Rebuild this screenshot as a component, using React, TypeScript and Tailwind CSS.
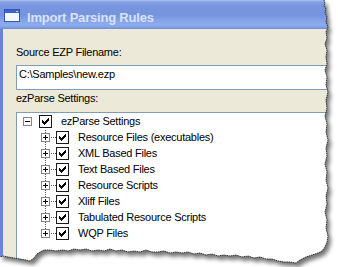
import React from "react";

const EDGE: [number, number][] = [
  [324, 0], [325, 3], [324, 6], [326, 9], [325, 13], [327, 17], [326, 22], [328, 27], [326, 32],
  [327, 38], [325, 44], [327, 50], [326, 57], [327, 64], [325, 70], [327, 77], [326, 85], [328, 92],
  [326, 100], [327, 108], [325, 116], [327, 124], [326, 132], [328, 140], [326, 148], [327, 156],
  [325, 164], [327, 172], [326, 180], [328, 188], [326, 196], [327, 204], [325, 212], [327, 220],
  [326, 228], [328, 236], [327, 242], [325, 247], [322, 251], [318, 253], [312, 255], [306, 257],
  [300, 260], [296, 263], [290, 262], [284, 262], [278, 261], [272, 259], [266, 259], [260, 257],
  [254, 258], [248, 256], [242, 257], [236, 255], [230, 256], [224, 255], [218, 256], [212, 254],
  [206, 255], [200, 253], [194, 254], [188, 252], [182, 253], [176, 252], [170, 253], [164, 251],
  [158, 252], [152, 252], [146, 250], [140, 252], [134, 251], [128, 252], [122, 250], [116, 251],
  [110, 249], [104, 251], [98, 250], [92, 251], [86, 249], [80, 250], [74, 249], [68, 251], [62, 250],
  [56, 251], [50, 250], [44, 250], [40, 252], [37, 254], [34, 258], [30, 261], [26, 260], [20, 259],
  [14, 258], [8, 257], [3, 256], [0, 257],
];

function TornEdge() {
  const line = EDGE.map((p) => p.join(" ")).join(" L");
  const outline = "M0 0 L" + line + " Z";
  const outside = "M-10 -10 H348 V277 H-10 Z " + outline;
  return (
    <svg
      className="pointer-events-none absolute inset-0"
      width="338"
      height="267"
      viewBox="0 0 338 267"
    >
      <defs>
        <filter id="blur" x="-10%" y="-10%" width="120%" height="120%">
          <feGaussianBlur stdDeviation="2" />
        </filter>
        <clipPath id="outside">
          <path d={outside} clipRule="evenodd" />
        </clipPath>
      </defs>
      <path d={outside} fill="#ffffff" fillRule="evenodd" />
      <g clipPath="url(#outside)">
        <path d={outline} transform="translate(3 4)" fill="#000" opacity="0.55" filter="url(#blur)" />
      </g>
      <path d={"M" + line} fill="none" stroke="#222" strokeWidth="0.9" strokeDasharray="1.5 0.7" />
    </svg>
  );
}

const CHECK = [
  "......#",
  ".....##",
  "#...###",
  "##.###.",
  "#####..",
  ".###...",
  "..#....",
];

function Checkbox({ className }: { className?: string }) {
  const rects: React.ReactElement[] = [];
  CHECK.forEach((row, y) =>
    row.split("").forEach((c, x) => {
      if (c === "#") rects.push(<rect key={`${x}-${y}`} x={3 + x} y={3 + y} width="1" height="1" fill="#000" />);
    })
  );
  return (
    <svg className={className} width="13" height="13" viewBox="0 0 13 13" shapeRendering="crispEdges">
      <rect x="0.5" y="0.5" width="12" height="12" fill="#fff" stroke="#1a1a1a" />
      {rects}
    </svg>
  );
}

function Expander({ minus }: { minus?: boolean }) {
  return (
    <>
      <rect x="1.5" y="4.5" width="8" height="8" fill="#fff" stroke="#858585" />
      <line x1="3" y1="8.5" x2="8" y2="8.5" stroke="#000" />
      {!minus && <line x1="5.5" y1="6" x2="5.5" y2="11" stroke="#000" />}
    </>
  );
}

function ChildRow({ label, last }: { label: string; last?: boolean }) {
  return (
    <div className="flex h-[16px] items-start pl-[23px]">
      <svg width="16" height="16" viewBox="0 0 16 16" shapeRendering="crispEdges">
        <line x1="5.5" y1="1" x2="5.5" y2={last ? 9 : 16} stroke="#555" strokeDasharray="1 1" />
        <line x1="11" y1="8.5" x2="16" y2="8.5" stroke="#555" strokeDasharray="1 1" />
        <Expander />
      </svg>
      <Checkbox className="mt-[2px]" />
      <span className="ml-[9px] whitespace-nowrap leading-[16px]">{label}</span>
    </div>
  );
}

function WindowIcon() {
  return (
    <svg width="16" height="13" viewBox="0 0 16 13" shapeRendering="crispEdges">
      <rect x="0.5" y="0.5" width="15" height="12" fill="#f4f7fe" stroke="#2f56b8" />
      <rect x="1" y="1" width="14" height="3" fill="#3c64c6" />
      <rect x="12" y="2" width="2" height="1" fill="#c9d6f5" />
    </svg>
  );
}

export default function App() {
  const children = [
    "Resource Files (executables)",
    "XML Based Files",
    "Text Based Files",
    "Resource Scripts",
    "Xliff Files",
    "Tabulated Resource Scripts",
  ];
  return (
    <div className="relative h-[267px] w-[338px] overflow-hidden bg-white font-['Liberation_Sans',Arial,sans-serif] text-[11px] tracking-[-0.25px] text-black">
      <div className="flex h-full flex-col">
        <div className="flex h-[29px] shrink-0 items-start bg-[linear-gradient(to_bottom,#a9c0f0_0px,#86a2e4_2px,#7895de_6px,#7693de_15px,#85a4ea_21px,#8eadef_25px,#7d99df_28px,#6b88d6_29px)]">
          <div className="ml-[4px] mt-[9px]">
            <WindowIcon />
          </div>
          <span className="ml-[7px] mt-[10px] whitespace-nowrap text-[13px] font-bold leading-[15px] tracking-[-0.2px] text-[#d9e3f8]">
            Import Parsing Rules
          </span>
        </div>
        <div className="flex flex-1 border-l-[3px] border-[#6686da] bg-[#ECE9D8]">
          <div className="flex flex-1 flex-col pl-[13px] pt-[17px]">
            <div className="h-[13px] whitespace-nowrap leading-[13px]">Source EZP Filename:</div>
            <div className="mt-[6px] h-[25px] shrink-0 border border-[#7F9DB9] bg-white pl-[2px] pt-[2px] leading-[13px]">
              C:\Samples\new.ezp
            </div>
            <div className="mt-[2px] h-[13px] whitespace-nowrap leading-[13px]">ezParse Settings:</div>
            <div className="mt-[7px] flex-1 border-l border-t border-[#7F9DB9] bg-white">
              <div className="flex h-[16px] items-start pl-[6px]">
                <svg className="-mt-[0px]" width="11" height="16" viewBox="0 0 11 16" shapeRendering="crispEdges">
                  <g transform="translate(-1 0)">
                    <Expander minus />
                  </g>
                </svg>
                <Checkbox className="ml-[5px] mt-[2px]" />
                <span className="ml-[9px] whitespace-nowrap leading-[16px]">ezParse Settings</span>
              </div>
              {children.map((c) => (
                <ChildRow key={c} label={c} />
              ))}
              <ChildRow label="WQP Files" last />
            </div>
          </div>
        </div>
      </div>
      <TornEdge />
    </div>
  );
}
